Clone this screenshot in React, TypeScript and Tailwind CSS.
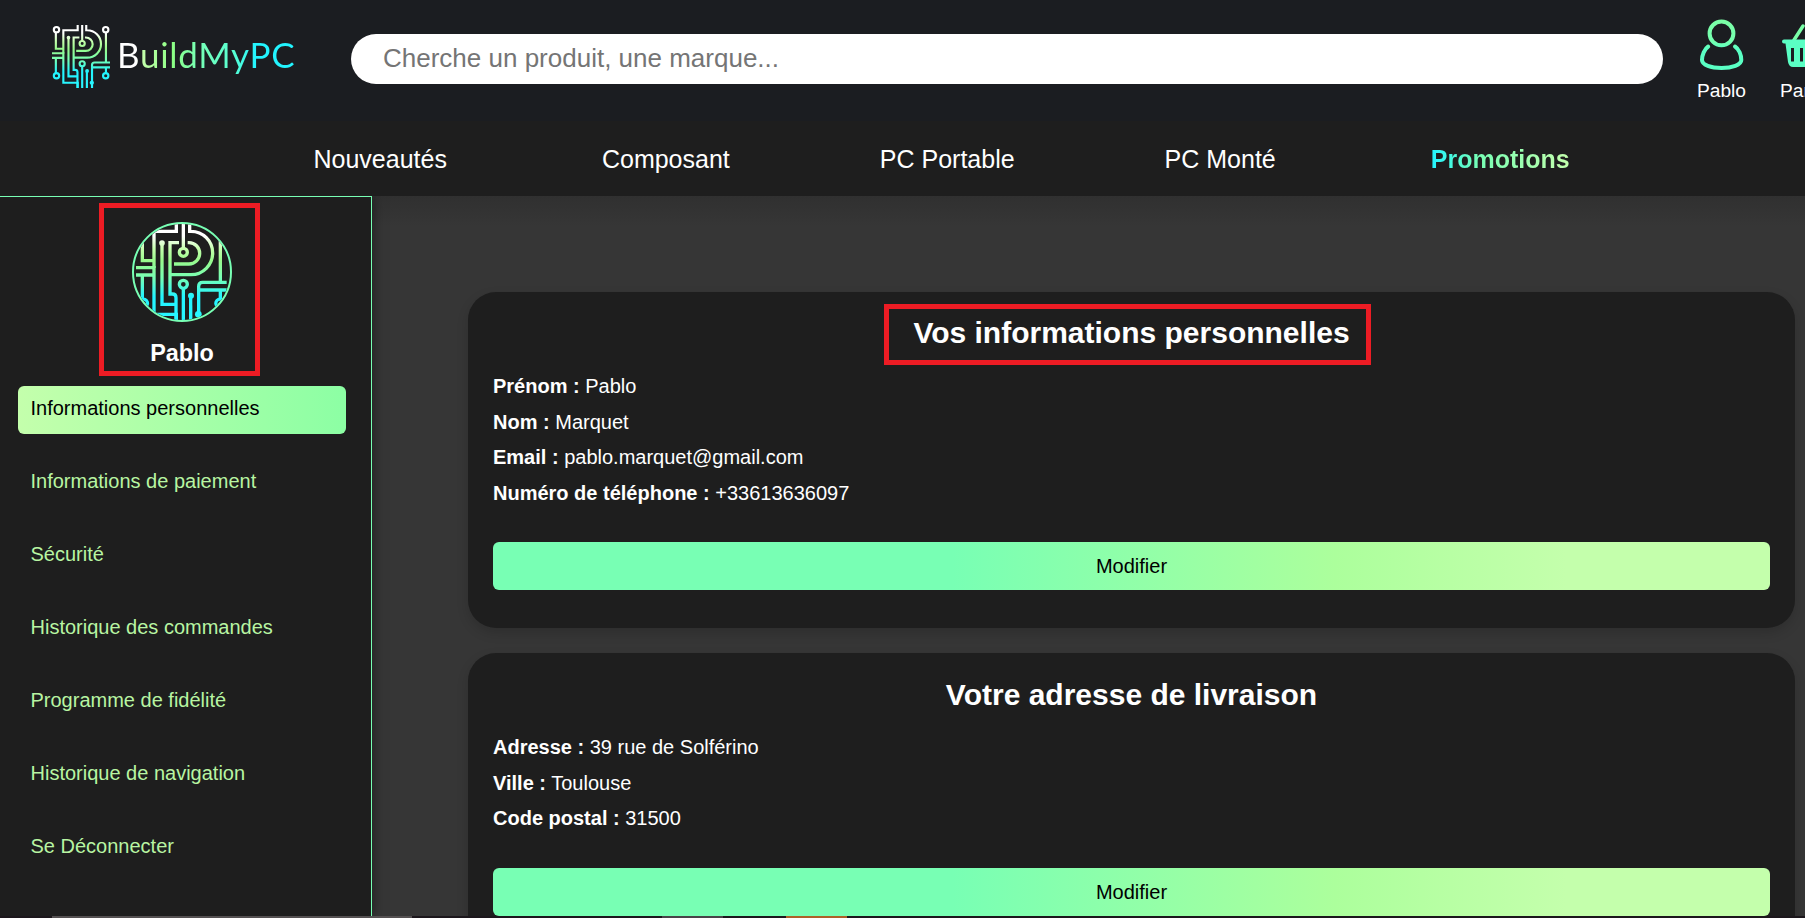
import type { ReactNode } from "react";

function CircuitArt({ id }: { id: string }) {
  const url = `url(#${id})`;
  return (
    <>
      <defs>
        <linearGradient id={id} gradientUnits="userSpaceOnUse" x1="0" y1="99" x2="0" y2="398">
          <stop offset="0" stopColor="#ffffff" />
          <stop offset="0.13" stopColor="#ffffff" />
          <stop offset="0.26" stopColor="#c4ffac" />
          <stop offset="0.38" stopColor="#98f98c" />
          <stop offset="0.55" stopColor="#78ffb4" />
          <stop offset="0.74" stopColor="#22f4ff" />
          <stop offset="1" stopColor="#2af6ff" />
        </linearGradient>
      </defs>
      <g fill="none" stroke={url} strokeWidth="10">
        <path d="M259 99V124H192V373H259V398" />
        <path d="M267 158H240V312H247Q258 312 258 323V398" />
        <path d="M216 160V343H256" />
        <path d="M280.1 99L280 174" />
        <path d="M299 99V124H303A65 65 0 0 1 303 254H240" />
        <path d="M293 158H297A32 32 0 0 1 297 222H252" />
        <circle cx="280" cy="187" r="12" />
        <circle cx="280" cy="283" r="12" />
        <path d="M280 296L280.1 398" />
        <path d="M302 318L302.1 398" />
        <path d="M410 277H338Q326 277 326 289V398M326 300H410" />
        <circle cx="390" cy="121" r="12.5" />
        <path d="M391 134L391.1 277M391 300L391.1 326" />
        <circle cx="390" cy="340" r="12.5" />
        <circle cx="160" cy="121" r="12.5" />
        <path d="M157 134V212H192M138 233H192.1V234M138 255H192M157 255V327" />
        <circle cx="160" cy="340" r="12.5" />
      </g>
      <g fill={url}>
        <circle cx="216" cy="159" r="8.5" />
        <circle cx="303" cy="317" r="9" />
        <circle cx="325" cy="373" r="10" />
      </g>
    </>
  );
}

function UserIcon() {
  return (
    <svg className="block h-[52px] w-[46px] shrink-0" viewBox="0 0 46 52" fill="none" strokeWidth="4" strokeLinecap="round">
      <defs>
        <linearGradient id="user" gradientUnits="userSpaceOnUse" x1="0" y1="0" x2="0" y2="52">
          <stop offset="0" stopColor="#7cffa6" />
          <stop offset="0.45" stopColor="#74ffb0" />
          <stop offset="0.6" stopColor="#5affc4" />
          <stop offset="1" stopColor="#5affc4" />
        </linearGradient>
      </defs>
      <circle cx="22.500" cy="15.400" r="11.900" stroke="url(#user)" />
      <path d="M9.2 28.500C5.500 31 3 37 3 42C3 47 12 50 22.500 50S42.300 47 42.300 42C42.300 37 40 31 36 28.500" stroke="url(#user)" />
    </svg>
  );
}

function BasketIcon() {
  return (
    <svg className="block h-[52px] w-[54px]" viewBox="0 0 54 52">
      <path d="M12 22L21 8M42 22L33 8" stroke="#7affa8" strokeWidth="3.5" strokeLinecap="round" />
      <path
        fillRule="evenodd"
        fill="#5affc4"
        d="M2 21.500H52A2 2 0 0 1 52 25.500H51L48 44Q47 49 43 49H11Q7 49 6 44L3.500 25.500H2A2 2 0 0 1 2 21.500ZM9 30V43.500H12V30ZM18 30V43.500H21V30ZM27 30V43.500H30V30ZM36 30V43.500H39V30Z"
      />
    </svg>
  );
}

const menu = [
  "Informations personnelles",
  "Informations de paiement",
  "Sécurité",
  "Historique des commandes",
  "Programme de fidélité",
  "Historique de navigation",
  "Se Déconnecter",
];

function Card({ title, rows, highlighted }: { title: ReactNode; rows: [string, string][]; highlighted?: boolean }) {
  return (
    <section className="rounded-[28px] bg-[#1e1e1e] px-[25px] pb-[38px] shadow-[0_5px_12px_rgba(0,0,0,0.15)]">
      <div className={highlighted ? "flex h-[77px] justify-center pt-[23px]" : "flex h-[77px] justify-center pt-[24px]"}>
        <h2 className="relative h-[35px] text-[30px] leading-[35px] font-bold">
          {title}
          {highlighted && <span className="absolute -top-[11px] -right-[21px] -bottom-[15px] -left-[29px] border-[5px] border-[#ed1c24]" />}
        </h2>
      </div>
      <div className="mb-[31px] pt-[0.4px]">
        {rows.map(([label, value]) => (
          <p key={label} className="h-[35.5px] text-[20px] leading-[35.5px]">
            <b>{label} :</b> {value}
          </p>
        ))}
      </div>
      <button className="-mt-[0.4px] block h-[48px] w-full rounded-[6px] bg-[linear-gradient(90deg,#78ffb4_0%,#78ffb4_36%,#acff9c_66%,#c4ffac_84%,#c4ffac_100%)] text-[20px] text-black">
        Modifier
      </button>
    </section>
  );
}

export default function App() {
  return (
    <div className="flex h-[918px] w-[1805px] flex-col overflow-hidden bg-[#373737] font-['Liberation_Sans',Arial,sans-serif] text-white">
      <header className="flex h-[121px] shrink-0 bg-[#1b1d21] pl-[52px]">
        <div className="flex w-[299px] shrink-0 pt-[25px]">
          <svg className="h-[63px] w-[58px] shrink-0" viewBox="139 99 271 299" preserveAspectRatio="none">
            <CircuitArt id="logo" />
          </svg>
          <span className="ml-[7px] h-[54px] bg-[linear-gradient(90deg,#fff_0%,#fff_11%,#c4ffac_14%,#8cff84_31%,#78ffb4_45%,#56ffd4_66%,#22f4ff_78%,#22f4ff_100%)] bg-clip-text pt-[8px] font-[Lato,sans-serif] text-[35px] leading-[42px] tracking-[0.7px] text-transparent">
            BuildMyPC
          </span>
        </div>
        <input
          className="mt-[34px] h-[50px] w-[1312px] shrink-0 rounded-full bg-white px-[32px] pb-[2px] text-[26px] placeholder:text-[#757575]"
          placeholder="Cherche un produit, une marque..."
        />
        <div className="ml-[34px] flex shrink-0 gap-[36px] pt-[18px] text-[19.2px] leading-[22px]">
          <div className="flex w-[49px] flex-col items-center">
            <UserIcon />
            <span className="mt-[10px]">Pablo</span>
          </div>
          <div className="flex flex-col items-start">
            <BasketIcon />
            <span className="mt-[10px] -ml-[2px]">Panier</span>
          </div>
        </div>
      </header>

      <nav className="flex h-[75px] shrink-0 bg-[#1e1e1e] pt-[24px] pl-[313.5px] text-[25px] leading-[29px]">
        <a>Nouveautés</a>
        <a className="ml-[155px]">Composant</a>
        <a className="ml-[150px]">PC Portable</a>
        <a className="ml-[150px]">PC Monté</a>
        <a className="ml-[155px] h-[32px] bg-[linear-gradient(90deg,#22f4ff_0%,#78ffb4_35%,#c4ffac_100%)] bg-clip-text font-bold text-transparent">
          Promotions
        </a>
      </nav>

      <div className="flex h-[720px] shrink-0 overflow-hidden">
        <aside className="z-10 w-[372px] shrink-0 border-t border-r border-[#78ffb4] bg-[#1e1e1e] pl-[18px] shadow-[0_0_12px_rgba(0,0,0,0.5)]">
          <div className="mt-[6px] ml-[81px] flex h-[173px] w-[161px] flex-col items-center border-[5px] border-[#ed1c24] pt-[14px] pl-[5px]">
            <svg className="h-[100px] w-[100px] shrink-0 rounded-full border-2 border-[#78ffb4]" viewBox="132 102 288 288">
              <CircuitArt id="avatar" />
            </svg>
            <strong className="mt-[18px] text-[23.4px] leading-[27px]">Pablo</strong>
          </div>
          <ul className="mt-[10px] flex w-[328px] flex-col gap-[25px] text-[20px]">
            {menu.map((m, i) => (
              <li
                key={m}
                className={
                  i === 0
                    ? "h-[48px] rounded-[6px] bg-[linear-gradient(90deg,#c4ffac,#8cffa4)] pl-[12.5px] leading-[44px] text-black"
                    : "h-[48px] pl-[12.5px] leading-[44px] text-[#b8f5a2]"
                }
              >
                {m}
              </li>
            ))}
          </ul>
        </aside>
        <main className="flex flex-1 flex-col gap-[25px] bg-[linear-gradient(180deg,#303030_0px,#363636_30px,#363636_100%)] pt-[96px] pr-[10px] pl-[96px]">
          <Card
            highlighted
            title="Vos informations personnelles"
            rows={[
              ["Prénom", "Pablo"],
              ["Nom", "Marquet"],
              ["Email", "pablo.marquet@gmail.com"],
              ["Numéro de téléphone", "+33613636097"],
            ]}
          />
          <Card
            title="Votre adresse de livraison"
            rows={[
              ["Adresse", "39 rue de Solférino"],
              ["Ville", "Toulouse"],
              ["Code postal", "31500"],
            ]}
          />
        </main>
      </div>
      <div className="flex h-[2px] shrink-0 bg-[#1c171c]">
        <span className="ml-[52px] w-[360px] bg-[#555152]" />
        <span className="ml-[250px] w-[61px] bg-[#484448]" />
        <span className="ml-[63px] w-[61px] bg-[#ad6128]" />
      </div>
    </div>
  );
}
